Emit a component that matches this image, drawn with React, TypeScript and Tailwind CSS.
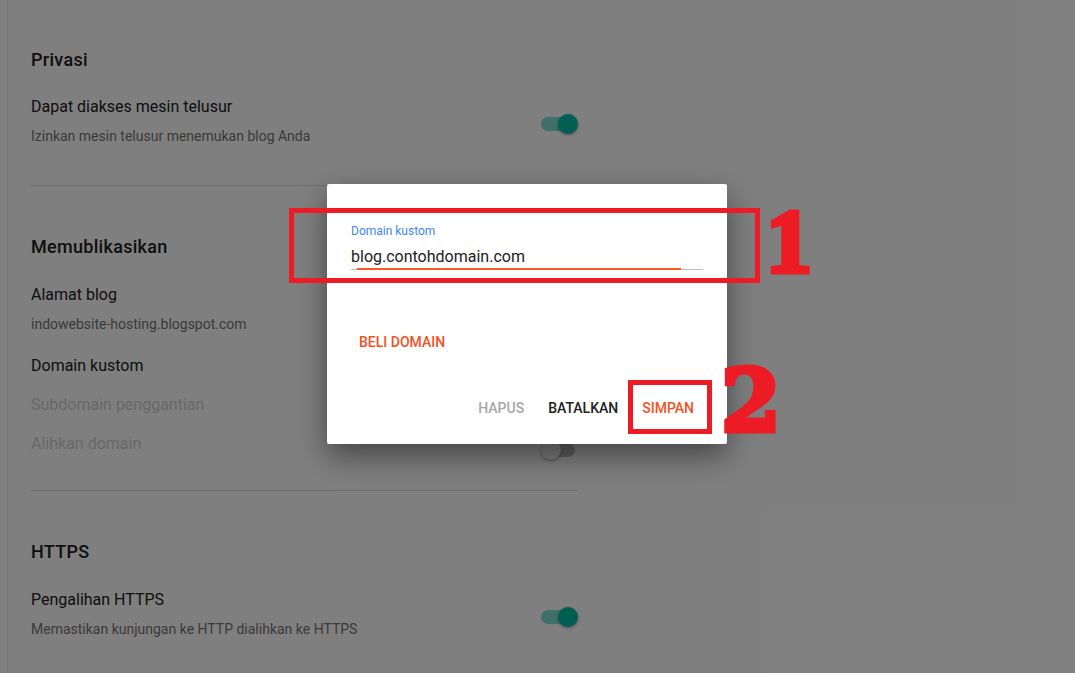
import React from "react";

type ToggleProps = { on: boolean; className?: string };

function Toggle({ on, className = "" }: ToggleProps) {
  return (
    <div className={`relative h-[20px] w-[37px] shrink-0 ${className}`}>
      <div
        className={`absolute left-0 top-[3px] h-[14px] w-[34px] rounded-full ${
          on ? "bg-[#00bfa5]/50" : "bg-black/25"
        }`}
      />
      <div
        className={`absolute top-0 h-[20px] w-[20px] rounded-full shadow-[0_1px_3px_rgba(0,0,0,0.4)] ${
          on ? "right-0 bg-[#00bfa5]" : "left-0 bg-[#fafafa]"
        }`}
      />
    </div>
  );
}

function Heading({ children, className = "" }: { children: React.ReactNode; className?: string }) {
  return (
    <h2 className={`text-[18px] font-medium leading-[24px] tracking-[0.3px] text-[#212121] ${className}`}>
      {children}
    </h2>
  );
}

export default function App() {
  return (
    <div className="relative h-[673px] w-full overflow-hidden bg-white font-['Roboto','Liberation_Sans',sans-serif]">
      {/* settings page underneath */}
      <div className="ml-[7px] h-full border-l border-[#eeeeee] pl-[23px]">
        <div className="w-[547px] pt-[48px]">
          <Heading>Privasi</Heading>
          <div className="mt-[25px] flex items-center justify-between">
            <div>
              <div className="text-[16px] leading-[20px] text-[#212121]">Dapat diakses mesin telusur</div>
              <div className="mt-[10px] text-[14px] leading-[18px] text-[#757575]">
                Izinkan mesin telusur menemukan blog Anda
              </div>
            </div>
            <Toggle on className="mt-[6px]" />
          </div>
          <div className="mt-[40px] h-px bg-[#dcdcdc]" />

          <Heading className="mt-[49px]">Memublikasikan</Heading>
          <div className="mt-[26px] text-[16px] leading-[20px] text-[#212121]">Alamat blog</div>
          <div className="mt-[10px] text-[14px] leading-[18px] text-[#757575]">
            indowebsite-hosting.blogspot.com
          </div>
          <div className="mt-[23px] text-[16px] leading-[20px] text-[#212121]">Domain kustom</div>
          <div className="mt-[19px] text-[16px] leading-[20px] text-[#d0d0d0]">Subdomain penggantian</div>
          <div className="mt-[19px] flex items-center justify-between">
            <div className="text-[16px] leading-[20px] text-[#d0d0d0]">Alihkan domain</div>
            <Toggle on={false} className="-mb-[6px] mt-[6px]" />
          </div>
          <div className="mt-[36px] h-px bg-[#dcdcdc]" />

          <Heading className="mt-[49px]">HTTPS</Heading>
          <div className="mt-[26px] flex items-center justify-between">
            <div>
              <div className="text-[16px] leading-[20px] text-[#212121]">Pengalihan HTTPS</div>
              <div className="mt-[10px] text-[14px] leading-[18px] text-[#757575]">
                Memastikan kunjungan ke HTTP dialihkan ke HTTPS
              </div>
            </div>
            <Toggle on className="mt-[6px]" />
          </div>
        </div>
      </div>

      {/* scrim */}
      <div className="absolute inset-0 bg-black/50" />

      {/* dialog */}
      <div className="absolute left-[327px] top-[184px] h-[260px] w-[400px] rounded-[2px] bg-white px-[24px] pt-[39px] shadow-[0_12px_30px_rgba(0,0,0,0.45)]">
        <label className="block text-[12px] leading-[16px] text-[#4285f4]">Domain kustom</label>
        <div className="relative mt-[6px] border-b border-[#bdbdbd]">
          <div className="text-[16px] leading-[24px] text-[#212121]">blog.contohdomain.com</div>
          <div className="absolute -bottom-px left-[6px] h-[2px] w-[324px] bg-[#ff5722]" />
        </div>
        <div className="mt-[62px] pl-[8px] text-[14px] font-medium leading-[20px] text-[#f4511e]">
          BELI DOMAIN
        </div>
        <div className="mt-[46px] flex justify-end gap-[24px] pr-[9px] text-[14px] font-medium leading-[20px]">
          <span className="text-[#a6a6a6]">HAPUS</span>
          <span className="text-[#212121]">BATALKAN</span>
          <span className="text-[#f4511e]">SIMPAN</span>
        </div>
      </div>

      {/* annotations */}
      <div className="absolute left-[289px] top-[208px] h-[75px] w-[471px] border-[5px] border-[#ed1c24]" />
      <div className="absolute left-[628px] top-[380px] h-[54px] w-[84px] border-[5px] border-[#ed1c24]" />
      <div className="absolute left-[766px] top-[195px] font-['Liberation_Serif',serif] text-[92px] font-black leading-none text-[#ed1c24] [-webkit-text-stroke:5px_#ed1c24]">
        1
      </div>
      <div className="absolute left-[721px] top-[358px] font-['DejaVu_Serif',serif] text-[86px] font-black leading-none text-[#ed1c24] [-webkit-text-stroke:5px_#ed1c24]">
        2
      </div>
    </div>
  );
}
